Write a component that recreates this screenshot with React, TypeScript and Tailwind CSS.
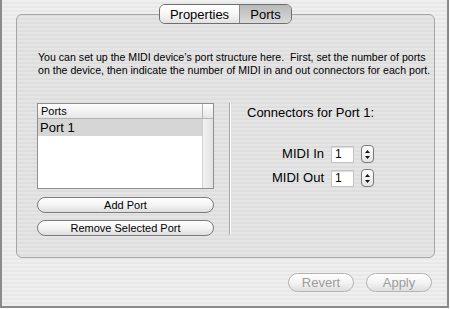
import React from 'react';

const font = { fontFamily: '"Liberation Sans", Arial, sans-serif' };

const Stepper = () => (
  <div className="flex h-[18px] w-[13px] flex-col items-center justify-center gap-[3px] rounded-[4px] border border-[#7a7a7a] bg-gradient-to-b from-white to-[#e4e4e4]">
    <svg width="5" height="3" viewBox="0 0 5 3">
      <path d="M0 3 L2.5 0 L5 3 Z" fill="#111" />
    </svg>
    <svg width="5" height="3" viewBox="0 0 5 3">
      <path d="M0 0 L2.5 3 L5 0 Z" fill="#111" />
    </svg>
  </div>
);

const PillButton = ({ label, disabled = false, className = '' }: { label: string; disabled?: boolean; className?: string }) => (
  <button
    className={
      'flex items-center justify-center rounded-full border bg-gradient-to-b from-white via-[#f4f4f4] to-[#dedede] ' +
      (disabled ? 'border-[#b4b4b4] text-[#9c9c9c] ' : 'border-[#7c7c7c] text-black ') +
      className
    }
  >
    {label}
  </button>
);

export default function App() {
  return (
    <div className="h-[309px] w-[450px] bg-white" style={font}>
      <div className="flex h-[308px] w-[449px] flex-col border-x-2 border-b-2 border-[#8a8a8a] bg-[repeating-linear-gradient(to_bottom,#efefef_0px,#efefef_2px,#e8e8e8_2px,#e8e8e8_4px)] pl-[14px] pt-[14px]">
        {/* Group box */}
        <div className="relative h-[244px] w-[419px] rounded-[6px] border border-[#a6a6a6] bg-black/[0.04] pl-[20px] pt-[36px]">
          {/* Segmented tabs */}
          <div className="absolute left-[142px] top-[-11px] flex h-[20px] w-[133px] overflow-hidden rounded-[6px] border border-[#6e6e6e] text-[13px] leading-none text-black">
            <div className="flex w-[80px] items-center justify-center border-r border-[#8a8a8a] bg-gradient-to-b from-white via-[#f7f7f7] to-[#e2e2e2]">
              Properties
            </div>
            <div className="flex flex-1 items-center justify-center bg-gradient-to-b from-[#b9b9b9] via-[#c9c9c9] to-[#dadada]">
              Ports
            </div>
          </div>

          <p className="ml-px text-[10.6px] leading-[13px] text-black">
            You can set up the MIDI device&#8217;s port structure here.&nbsp; First, set the number of ports
            <br />
            on the device, then indicate the number of MIDI in and out connectors for each port.
          </p>

          <div className="mt-[26px] flex">
            {/* Left column */}
            <div className="flex w-[177px] flex-col">
              <div className="flex h-[86px] flex-col border border-[#8f8f8f] bg-white">
                <div className="flex h-[15px] border-b border-[#b3b3b3] bg-gradient-to-b from-white to-[#e6e6e6]">
                  <div className="flex-1 pl-[3px] text-[11px] leading-[14px]">Ports</div>
                  <div className="w-[11px] border-l border-[#b3b3b3]" />
                </div>
                <div className="flex flex-1">
                  <div className="flex-1">
                    <div className="h-[17px] bg-[#d6d6d6] pl-[2px] text-[13px] leading-[17px]">Port 1</div>
                  </div>
                  <div className="w-[11px] border-l border-[#d0d0d0] bg-gradient-to-r from-[#f2f2f2] to-[#e2e2e2]" />
                </div>
              </div>
              <PillButton label="Add Port" className="mt-[8px] h-[16px] text-[11px]" />
              <PillButton label="Remove Selected Port" className="mt-[7px] h-[16px] text-[11px]" />
            </div>

            {/* Divider */}
            <div className="ml-[15px] h-[132px] w-[2px] border-r border-white bg-[#a9a9a9]" />

            {/* Right column */}
            <div className="flex flex-col pl-[16px] pt-[2px]">
              <div className="text-[13px] leading-[16px]">Connectors for Port 1:</div>
              <div className="mt-[24px] flex flex-col gap-[6px]">
                {[
                  ['MIDI In', '1'],
                  ['MIDI Out', '1'],
                ].map(([label, value]) => (
                  <div key={label} className="flex h-[18px] items-center">
                    <div className="w-[77px] text-right text-[13px]">{label}</div>
                    <div className="ml-[7px] flex h-[17px] w-[23px] items-center border border-[#c4c4c4] bg-white pl-[3px] text-[12px] shadow-[inset_0_1px_1px_rgba(0,0,0,0.15)]">
                      {value}
                    </div>
                    <div className="ml-[7px]">
                      <Stepper />
                    </div>
                  </div>
                ))}
              </div>
            </div>
          </div>
        </div>

        {/* Bottom buttons */}
        <div className="mt-[15px] flex justify-end gap-[12px] pr-[15px]">
          <PillButton label="Revert" disabled className="h-[19px] w-[66px] text-[13px]" />
          <PillButton label="Apply" disabled className="h-[19px] w-[66px] text-[13px]" />
        </div>
      </div>
    </div>
  );
}
